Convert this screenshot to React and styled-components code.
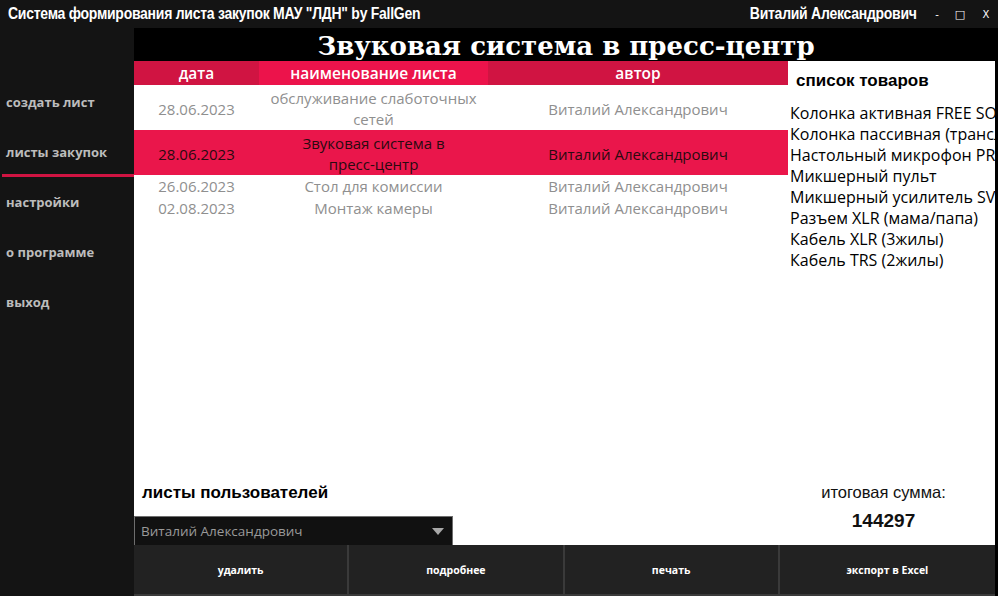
import React from "react";
import styled, { createGlobalStyle } from "styled-components";

const Global = createGlobalStyle`
  html, body { margin: 0; padding: 0; background: #141414; }
  #root { width: 998px; height: 596px; overflow: hidden; }
  * { box-sizing: border-box; }
`;

const Window = styled.div`
  width: 998px;
  height: 596px;
  display: flex;
  flex-direction: column;
  background: #141414;
  font-family: "Open Sans", sans-serif;
`;

const TitleBar = styled.div`
  height: 28px;
  flex: none;
  display: flex;
  align-items: center;
  padding: 0 4px 0 8px;
  color: #fff;
`;

const TitleText = styled.span`
  display: inline-block;
  font-family: "Liberation Sans", Arial, sans-serif;
  font-weight: 700;
  font-size: 16px;
  letter-spacing: -0.3px;
  white-space: nowrap;
  transform: scaleX(0.875);
  transform-origin: ${(p) => (p.$right ? "right center" : "left center")};
`;

const Spacer = styled.div`
  flex: 1;
`;

const Controls = styled.div`
  display: flex;
  align-items: center;
  margin-left: 12px;
`;

const CtrlBtn = styled.span`
  width: 16px;
  margin-left: ${(p) => p.$ml || 0}px;
  text-align: center;
  font-family: "DejaVu Sans", sans-serif;
  font-size: ${(p) => p.$size || 10}px;
  color: #fff;
`;

const Body = styled.div`
  flex: 1;
  display: flex;
  min-height: 0;
`;

const Sidebar = styled.nav`
  width: 134px;
  flex: none;
  display: flex;
  flex-direction: column;
  padding-top: 49px;
`;

const NavItem = styled.div`
  height: 50px;
  display: flex;
  align-items: center;
  margin-left: ${(p) => (p.$active ? "2px" : "0")};
  padding-left: ${(p) => (p.$active ? "4px" : "6px")};
  padding-top: ${(p) => (p.$active ? "3px" : "0")};
  font-family: "Open Sans", sans-serif;
  font-weight: 700;
  font-size: 13px;
  color: #bcbcbc;
  border-bottom: ${(p) => (p.$active ? "3px solid #d01442" : "0")};
`;

const Main = styled.div`
  flex: 1;
  display: flex;
  flex-direction: column;
  background: #000;
  min-width: 0;
`;

const Banner = styled.h1`
  margin: 0;
  height: 33px;
  flex: none;
  display: flex;
  align-items: center;
  justify-content: center;
  font-family: "DejaVu Serif", "Liberation Serif", serif;
  font-weight: 700;
  font-size: 26px;
  color: #fff;
  padding-top: 2px;
`;

const Workspace = styled.div`
  flex: 1;
  display: grid;
  grid-template-columns: 654px minmax(0, 1fr);
  margin-right: 3px;
  background: #fff;
  min-height: 0;
`;

const LeftPane = styled.div`
  display: flex;
  flex-direction: column;
`;

const Table = styled.div`
  display: grid;
  grid-template-columns: 125px 229px 300px;
`;

const HeadCell = styled.div`
  height: 24px;
  display: flex;
  align-items: center;
  justify-content: center;
  background: ${(p) => (p.$light ? "#ec134b" : "#d01442")};
  color: #fff;
  font-family: "Open Sans", sans-serif;
  font-weight: 600;
  font-size: 15.5px;
`;

const Cell = styled.div`
  min-height: 22px;
  display: flex;
  align-items: center;
  justify-content: center;
  text-align: center;
  line-height: 21px;
  padding: ${(p) => (p.$tall ? "3px" : "0")} ${(p) => (p.$wrap ? "9px" : "0")} 0;
  font-family: "Open Sans", sans-serif;
  font-size: 15px;
  background: ${(p) => (p.$sel ? "#ea164b" : "#fff")};
  color: ${(p) => (p.$sel ? "#2a0a10" : "#8f8f8f")};
`;

const NoWrap = styled.span`
  white-space: nowrap;
`;

const UsersLabel = styled.div`
  margin-top: auto;
  padding-left: 8px;
  font-family: "Liberation Sans", Arial, sans-serif;
  font-weight: 700;
  font-size: 17px;
  color: #000;
  line-height: 20px;
  margin-bottom: 13px;
`;

const Select = styled.div`
  width: 319px;
  height: 29px;
  display: flex;
  align-items: center;
  justify-content: space-between;
  background: #111;
  border: 1px solid #6e6e6e;
  border-bottom: 0;
  padding: 0 8px 0 6px;
  font-family: "Open Sans", sans-serif;
  font-size: 13.5px;
  color: #9a9a9a;
`;

const RightPane = styled.div`
  display: flex;
  flex-direction: column;
  overflow: hidden;
  min-width: 0;
`;

const ItemsTitle = styled.div`
  padding: 10px 0 0 8px;
  height: 36px;
  font-family: "Liberation Sans", Arial, sans-serif;
  font-weight: 700;
  font-size: 17px;
  color: #000;
`;

const ItemsList = styled.ul`
  list-style: none;
  margin: 6px 0 0;
  padding: 0 0 0 2px;
  overflow: hidden;
`;

const Item = styled.li`
  height: 21px;
  line-height: 21px;
  white-space: nowrap;
  font-family: "Open Sans", sans-serif;
  font-size: 16px;
  color: #000;
`;

const Summary = styled.div`
  margin-top: auto;
  display: flex;
  flex-direction: column;
  align-items: center;
  padding-right: 16px;
  padding-bottom: 14px;
`;

const SumLabel = styled.div`
  font-family: "Liberation Sans", Arial, sans-serif;
  font-size: 16.5px;
  color: #111;
  line-height: 20px;
`;

const SumValue = styled.div`
  margin-top: 9px;
  font-family: "Liberation Sans", Arial, sans-serif;
  font-weight: 700;
  font-size: 19px;
  color: #111;
  line-height: 20px;
`;

const ButtonBar = styled.div`
  height: 51px;
  flex: none;
  display: grid;
  grid-template-columns: repeat(4, 1fr);
  margin-right: 3px;
  background: #3a3a3a;
`;

const ActionButton = styled.button`
  height: 49px;
  margin: 0 ${(p) => (p.$last ? "0" : "2px")} 2px 0;
  border: 0;
  background: #222;
  color: #fff;
  font-family: "Open Sans", sans-serif;
  font-weight: 700;
  font-size: 10.5px;
  padding: 0;
`;

const rows = [
  { date: "28.06.2023", name: "обслуживание слаботочных сетей", author: "Виталий Александрович", tall: true },
  {
    date: "28.06.2023",
    name: (
      <>
        Звуковая система в <NoWrap>пресс-центр</NoWrap>
      </>
    ),
    author: "Виталий Александрович",
    sel: true,
    tall: true,
  },
  { date: "26.06.2023", name: "Стол для комиссии", author: "Виталий Александрович" },
  { date: "02.08.2023", name: "Монтаж камеры", author: "Виталий Александрович" },
];

const items = [
  "Колонка активная FREE SOUND",
  "Колонка пассивная (трансляционная)",
  "Настольный микрофон PROAUDIO",
  "Микшерный пульт",
  "Микшерный усилитель SVS Audiotechnik",
  "Разъем XLR (мама/папа)",
  "Кабель XLR (3жилы)",
  "Кабель TRS (2жилы)",
];

export default function App() {
  return (
    <>
      <Global />
      <Window>
        <TitleBar>
          <TitleText>Система формирования листа закупок МАУ "ЛДН" by FallGen</TitleText>
          <Spacer />
          <TitleText $right>Виталий Александрович</TitleText>
          <Controls>
            <CtrlBtn>-</CtrlBtn>
            <CtrlBtn $ml={7} $size={11}>□</CtrlBtn>
            <CtrlBtn $ml={10}>X</CtrlBtn>
          </Controls>
        </TitleBar>
        <Body>
          <Sidebar>
            <NavItem>создать лист</NavItem>
            <NavItem $active>листы закупок</NavItem>
            <NavItem>настройки</NavItem>
            <NavItem>о программе</NavItem>
            <NavItem>выход</NavItem>
          </Sidebar>
          <Main>
            <Banner>Звуковая система в пресс-центр</Banner>
            <Workspace>
              <LeftPane>
                <Table>
                  <HeadCell>дата</HeadCell>
                  <HeadCell $light>наименование листа</HeadCell>
                  <HeadCell>автор</HeadCell>
                  {rows.map((r, i) => (
                    <React.Fragment key={i}>
                      <Cell $sel={r.sel} $tall={r.tall}>{r.date}</Cell>
                      <Cell $sel={r.sel} $tall={r.tall} $wrap>
                        <span>{r.name}</span>
                      </Cell>
                      <Cell $sel={r.sel} $tall={r.tall}>{r.author}</Cell>
                    </React.Fragment>
                  ))}
                </Table>
                <UsersLabel>листы пользователей</UsersLabel>
                <Select>
                  <span>Виталий Александрович</span>
                  <svg width="12" height="7" viewBox="0 0 12 7">
                    <path d="M0 0 H12 L6 7 Z" fill="#a8a8a8" />
                  </svg>
                </Select>
              </LeftPane>
              <RightPane>
                <ItemsTitle>список товаров</ItemsTitle>
                <ItemsList>
                  {items.map((t) => (
                    <Item key={t}>{t}</Item>
                  ))}
                </ItemsList>
                <Summary>
                  <SumLabel>итоговая сумма:</SumLabel>
                  <SumValue>144297</SumValue>
                </Summary>
              </RightPane>
            </Workspace>
            <ButtonBar>
              <ActionButton>удалить</ActionButton>
              <ActionButton>подробнее</ActionButton>
              <ActionButton>печать</ActionButton>
              <ActionButton $last>экспорт в Excel</ActionButton>
            </ButtonBar>
          </Main>
        </Body>
      </Window>
    </>
  );
}
